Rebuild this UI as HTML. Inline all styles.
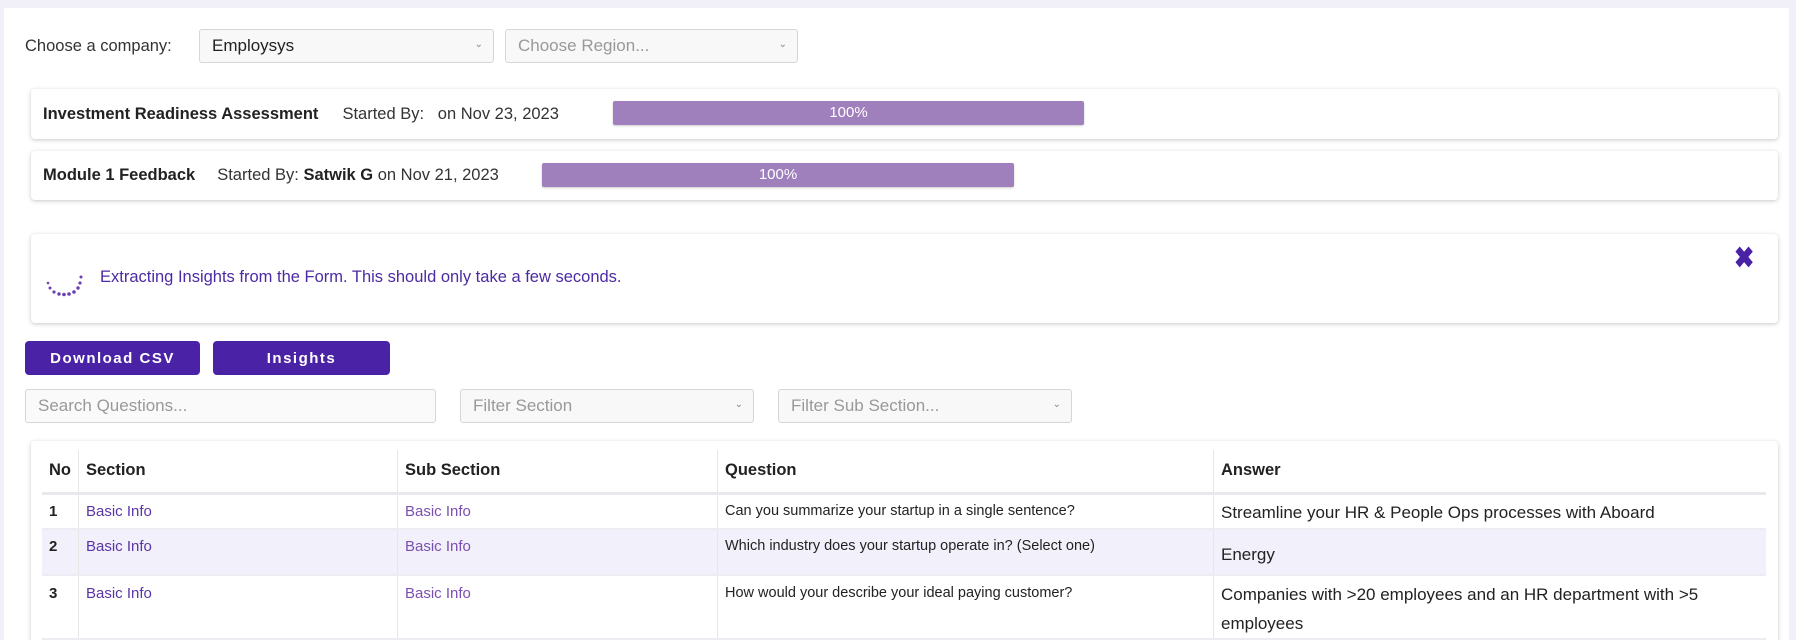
<!DOCTYPE html>
<html><head><meta charset="utf-8"><style>
*{box-sizing:border-box;margin:0;padding:0}
html,body{width:1796px;height:640px;overflow:hidden}
body{background:#fff;font-family:"Liberation Sans",sans-serif;color:#222;position:relative}
.abs{position:absolute}
.band{left:0;top:0;width:1796px;height:8px;background:#f1f0f8}
.lstrip{left:0;top:0;width:4px;height:640px;background:#f1f0f8}
.rstrip{left:1789px;top:0;width:7px;height:640px;background:#f1f0f8}
.sel{height:34px;border:1px solid #d6d6d6;border-radius:3px;background:#f8f8f8;font-size:17px;padding:0 12px;display:flex;align-items:center;color:#222}
.sel.ph{color:#999}
.sel .car{position:absolute;right:10px;top:9px;font-size:10px;color:#888}
.card{left:31px;width:1747px;background:#fff;border-radius:4px;box-shadow:0 1px 4px rgba(0,0,0,.22)}
.row{display:flex;align-items:center;height:100%;padding-left:12px;font-size:16.5px}
.prog{position:absolute;height:24px;background:#9f80bd;border-radius:2px;color:#fff;font-size:15px;text-align:center;line-height:24px;box-shadow:0 1px 2px rgba(0,0,0,.2)}
.btn{top:341px;height:34px;background:#4a22a6;color:#fff;border-radius:4px;font-weight:bold;font-size:15px;letter-spacing:1.5px;display:flex;align-items:center;justify-content:center}
table{border-collapse:collapse;position:absolute;left:11px;top:9px;width:1724px;font-size:15px}
td,th{text-align:left;vertical-align:top;padding:0 7px;border-left:1px solid #e6e6e6}
td:first-child,th:first-child{border-left:none}
th{height:43px;vertical-align:middle;font-size:16.5px;border-bottom:3px solid #e8e8ee}
td{border-bottom:2px solid #ececf2}
.l{color:#5a35a6}
.l2{color:#7a50b0}
.q{font-size:14.5px}
.a{font-size:17px;line-height:29px}
</style></head><body>
<div class="abs band"></div><div class="abs lstrip"></div><div class="abs rstrip"></div>
<div class="abs" style="left:25px;top:37px;font-size:16.5px;color:#333">Choose a company:</div>
<div class="abs sel" style="left:199px;top:29px;width:295px">Employsys<span class="car">&#8964;</span></div>
<div class="abs sel ph" style="left:505px;top:29px;width:293px">Choose Region...<span class="car">&#8964;</span></div>

<div class="abs card" style="top:89px;height:50px"><div class="row"><b>Investment Readiness Assessment</b><span style="margin-left:24px;color:#333">Started By: &nbsp;&nbsp;on Nov 23, 2023</span></div>
<div class="prog" style="left:582px;top:12px;width:471px">100%</div></div>
<div class="abs card" style="top:151px;height:49px"><div class="row"><b>Module 1 Feedback</b><span style="margin-left:22px;color:#333">Started By: <b style="color:#222">Satwik G</b> on Nov 21, 2023</span></div>
<div class="prog" style="left:511px;top:12px;width:472px">100%</div></div>

<div class="abs card" style="top:234px;height:89px">
<svg class="abs" style="left:15px;top:40px" width="42" height="26" viewBox="0 0 42 26"><g fill="#6a3fb0"><circle cx="2" cy="9" r="1.3"/><circle cx="4" cy="14" r="1.5"/><circle cx="8" cy="18" r="1.6"/><circle cx="13" cy="20" r="1.7"/><circle cx="18" cy="20.5" r="1.8"/><circle cx="23" cy="20" r="1.8"/><circle cx="28" cy="18" r="1.8"/><circle cx="32" cy="14" r="1.7"/><circle cx="34" cy="9" r="1.6"/><circle cx="35" cy="3" r="1.5"/></g></svg>
<div class="abs" style="left:69px;top:34px;font-size:16.5px;color:#4c2aa3">Extracting Insights from the Form. This should only take a few seconds.</div>
<div class="abs" style="left:1703px;top:10px;font-size:24px;font-weight:bold;color:#4a22a6;transform:scaleY(1.2)">&#10006;</div>
</div>

<div class="abs btn" style="left:25px;width:175px">Download CSV</div>
<div class="abs btn" style="left:213px;width:177px">Insights</div>

<div class="abs sel ph" style="left:25px;top:389px;width:411px;background:#fafafa">Search Questions...</div>
<div class="abs sel ph" style="left:460px;top:389px;width:294px">Filter Section<span class="car">&#8964;</span></div>
<div class="abs sel ph" style="left:778px;top:389px;width:294px">Filter Sub Section...<span class="car">&#8964;</span></div>

<div class="abs card" style="top:441px;height:210px">
<table>
<tr><th style="width:36px">No</th><th style="width:319px">Section</th><th style="width:320px">Sub Section</th><th style="width:496px">Question</th><th>Answer</th></tr>
<tr style="height:36px"><td style="padding-top:8px"><b>1</b></td><td class="l" style="padding-top:8px">Basic Info</td><td class="l2" style="padding-top:8px">Basic Info</td><td class="q" style="padding-top:8px">Can you summarize your startup in a single sentence?</td><td class="a" style="padding-top:3px">Streamline your HR &amp; People Ops processes with Aboard</td></tr>
<tr style="height:46px;background:#f2f0fa"><td style="padding-top:8px"><b>2</b></td><td class="l" style="padding-top:8px">Basic Info</td><td class="l2" style="padding-top:8px">Basic Info</td><td class="q" style="padding-top:8px">Which industry does your startup operate in? (Select one)</td><td class="a" style="padding-top:10px">Energy</td></tr>
<tr style="height:62px"><td style="padding-top:9px"><b>3</b></td><td class="l" style="padding-top:9px">Basic Info</td><td class="l2" style="padding-top:9px">Basic Info</td><td class="q" style="padding-top:9px">How would your describe your ideal paying customer?</td><td class="a" style="padding-top:4px">Companies with &gt;20 employees and an HR department with &gt;5 employees</td></tr>
</table>
</div>
</body></html>
